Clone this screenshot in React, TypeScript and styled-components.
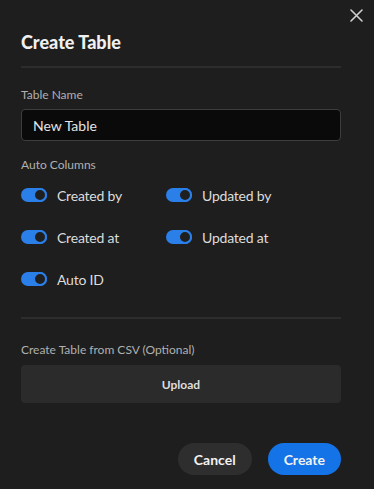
import React from "react";
import styled, { createGlobalStyle } from "styled-components";

const Global = createGlobalStyle`
  html, body { margin: 0; padding: 0; background: #1e1e1e; }
  body { font-family: Lato, "Noto Sans", sans-serif; -webkit-font-smoothing: antialiased; }
  * { box-sizing: border-box; }
`;

const Dialog = styled.div`
  position: relative;
  width: 374px;
  height: 489px;
  background: #1e1e1e;
  padding: 31px 33px 0 21px;
  display: flex;
  flex-direction: column;
`;

const CloseButton = styled.button`
  position: absolute;
  top: 9px;
  right: 11px;
  width: 13px;
  height: 13px;
  padding: 0;
  border: none;
  background: transparent;
  color: #cfcfcf;
  display: flex;
  cursor: pointer;
`;

const Title = styled.h1`
  margin: 0;
  font-size: 18px;
  line-height: 22px;
  font-weight: 900;
  color: #f0f0f0;
`;

const Divider = styled.div<{ $mt: number }>`
  height: 2px;
  background: #2d2d2d;
  margin-top: ${(p) => p.$mt}px;
`;

const FieldLabel = styled.div<{ $mt: number; $mb: number }>`
  font-size: 12px;
  line-height: 16px;
  color: #b0b0b0;
  margin-top: ${(p) => p.$mt}px;
  margin-bottom: ${(p) => p.$mb}px;
`;

const Input = styled.input`
  height: 32px;
  width: 100%;
  background: #0a0a0a;
  border: 1px solid #3d3d3d;
  border-radius: 4px;
  padding: 0 11px;
  font-family: inherit;
  font-size: 14px;
  color: #e3e3e3;
  outline: none;
`;

const SwitchGrid = styled.div`
  display: grid;
  grid-template-columns: 145px 1fr;
  grid-auto-rows: 32px;
  row-gap: 10px;
`;

const SwitchRow = styled.label`
  display: flex;
  align-items: center;
  gap: 10px;
  font-size: 14px;
  letter-spacing: -0.2px;
  color: #dcdcdc;
`;

const Track = styled.span<{ $on: boolean }>`
  width: 26px;
  height: 14px;
  border-radius: 7px;
  background: ${(p) => (p.$on ? "#2b7fe8" : "#4a4a4a")};
  display: flex;
  justify-content: ${(p) => (p.$on ? "flex-end" : "flex-start")};
  flex-shrink: 0;
`;

const Knob = styled.span<{ $on: boolean }>`
  width: 14px;
  height: 14px;
  border-radius: 50%;
  border: 2px solid ${(p) => (p.$on ? "#2b7fe8" : "#8a8a8a")};
  background: #1f1f1f;
`;

const UploadBox = styled.button`
  height: 38px;
  width: 100%;
  border: none;
  border-radius: 4px;
  background: #2b2b2b;
  color: #dedede;
  font-family: inherit;
  font-size: 12px;
  font-weight: 700;
  cursor: pointer;
`;

const Footer = styled.div`
  margin-top: 40px;
  display: flex;
  justify-content: flex-end;
  gap: 16px;
`;

const Button = styled.button<{ $primary?: boolean }>`
  height: 32px;
  padding: 0 16px;
  border: none;
  border-radius: 16px;
  background: ${(p) => (p.$primary ? "#1473e6" : "#2e2e2e")};
  color: #f2f2f2;
  font-family: inherit;
  font-size: 14px;
  font-weight: 700;
  cursor: pointer;
`;

const Switch = ({ label, on = true }: { label: string; on?: boolean }) => (
  <SwitchRow>
    <Track $on={on}>
      <Knob $on={on} />
    </Track>
    {label}
  </SwitchRow>
);

export default function App() {
  return (
    <>
      <Global />
      <Dialog>
        <CloseButton aria-label="Close">
          <svg width="13" height="13" viewBox="0 0 13 13">
            <path d="M1 1 L12 12 M12 1 L1 12" stroke="currentColor" strokeWidth="1.6" strokeLinecap="round" />
          </svg>
        </CloseButton>
        <Title>Create Table</Title>
        <Divider $mt={13} />
        <FieldLabel $mt={19} $mb={6}>Table Name</FieldLabel>
        <Input defaultValue="New Table" />
        <FieldLabel $mt={16} $mb={6}>Auto Columns</FieldLabel>
        <SwitchGrid>
          <Switch label="Created by" />
          <Switch label="Updated by" />
          <Switch label="Created at" />
          <Switch label="Updated at" />
          <Switch label="Auto ID" />
        </SwitchGrid>
        <Divider $mt={22} />
        <FieldLabel $mt={23} $mb={7}>Create Table from CSV (Optional)</FieldLabel>
        <UploadBox>Upload</UploadBox>
        <Footer>
          <Button>Cancel</Button>
          <Button $primary>Create</Button>
        </Footer>
      </Dialog>
    </>
  );
}
